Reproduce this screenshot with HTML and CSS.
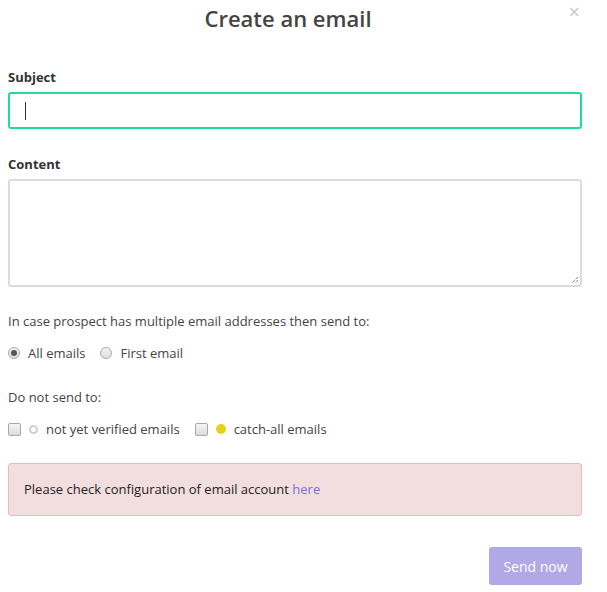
FILE: index.html
```html
<!DOCTYPE html>
<html>
<head>
<meta charset="utf-8">
<link rel="stylesheet" href="styles.css">
</head>
<body>
<div class="modal">
  <div class="header">
    <h1 class="title">Create an email</h1>
    <span class="close">×</span>
  </div>
  <div class="field subject-field">
    <label class="label">Subject</label>
    <div class="input focused"><span class="caret"></span></div>
  </div>
  <div class="field content-field">
    <label class="label">Content</label>
    <div class="textarea">
      <svg class="grip" width="8" height="8" viewBox="0 0 8 8"><path d="M7 1 L1 7 M7 4 L4 7" stroke="#555" stroke-width="1" stroke-dasharray="1 1" fill="none"/></svg>
    </div>
  </div>
  <p class="text q-text">In case prospect has multiple email addresses then send to:</p>
  <div class="opt-row radio-row">
    <span class="opt"><span class="radio checked"></span>All emails</span>
    <span class="opt"><span class="radio"></span>First email</span>
  </div>
  <p class="text dns-text">Do not send to:</p>
  <div class="opt-row check-row">
    <span class="opt"><span class="checkbox"></span><span class="dot dot-hollow"></span>not yet verified emails</span>
    <span class="opt"><span class="checkbox"></span><span class="dot dot-yellow"></span>catch-all emails</span>
  </div>
  <div class="alert">Please check configuration of email account <a class="link" href="#">here</a></div>
  <div class="footer">
    <button class="btn">Send now</button>
  </div>
</div>
</body>
</html>
```
FILE: styles.css
```css
html, body {
  margin: 0;
  padding: 0;
  background: #fff;
}
body {
  font-family: "Open Sans", "Segoe UI", sans-serif;
  color: #333;
  font-size: 13px;
}
.modal {
  width: 574px;
  padding: 0 25px 0 8px;
}
.header {
  position: relative;
  height: 40px;
  display: flex;
  justify-content: center;
}
.title {
  margin: 0;
  margin-right: 14px;
  padding-top: 2px;
  font-size: 22px;
  font-weight: 600;
  color: #444;
  line-height: 32px;
}
.close {
  position: absolute;
  right: 2px;
  top: 2px;
  font-size: 20px;
  line-height: 20px;
  color: #c8c8c8;
}
.field {
  display: flex;
  flex-direction: column;
}
.subject-field {
  margin-top: 28px;
}
.content-field {
  margin-top: 26px;
}
.label {
  font-weight: 700;
  font-size: 13px;
  color: #333;
  line-height: 18px;
  margin-bottom: 6px;
}
.input {
  height: 33px;
  border: 2px solid #1fdc9c;
  border-radius: 3px;
  position: relative;
}
.caret {
  position: absolute;
  left: 15px;
  top: 8px;
  width: 1px;
  height: 18px;
  background: #333;
}
.textarea {
  height: 104px;
  border: 2px solid #dcd9e8;
  border-radius: 3px;
  position: relative;
}
.grip {
  position: absolute;
  right: 1px;
  bottom: 1px;
}
.text {
  margin: 0;
  line-height: 18px;
  color: #444;
}
.q-text {
  margin-top: 25px;
}
.opt-row {
  display: flex;
  gap: 15px;
  line-height: 18px;
  color: #444;
}
.radio-row {
  margin-top: 14px;
}
.dns-text {
  margin-top: 26px;
}
.check-row {
  margin-top: 14px;
}
.opt {
  display: flex;
  align-items: center;
}
.radio {
  width: 10px;
  height: 10px;
  border: 1px solid #a9a9a9;
  border-radius: 50%;
  background: linear-gradient(#f3f3f3, #dedede);
  margin-right: 8px;
  position: relative;
}
.radio.checked::after {
  content: "";
  position: absolute;
  left: 2px;
  top: 2px;
  width: 6px;
  height: 6px;
  border-radius: 50%;
  background: #555;
}
.checkbox {
  width: 11px;
  height: 11px;
  border: 1px solid #a9a9a9;
  border-radius: 2px;
  background: linear-gradient(#f6f6f6, #dcdcdc);
  margin-right: 8px;
}
.dot {
  width: 9px;
  height: 9px;
  border-radius: 50%;
  margin-right: 8px;
  box-sizing: border-box;
}
.dot-hollow {
  border: 2px solid #cfcfcf;
}
.dot-yellow {
  background: #e3d21b;
  width: 10px;
  height: 10px;
}
.alert {
  margin-top: 25px;
  background: #f2dede;
  border: 1px solid #e6bcbf;
  border-radius: 3px;
  padding: 16px 15px 17px;
  line-height: 18px;
  color: #222;
}
.link {
  color: #7c6fd8;
  text-decoration: none;
}
.footer {
  display: flex;
  justify-content: flex-end;
  margin-top: 31px;
}
.btn {
  width: 93px;
  height: 38px;
  border: none;
  border-radius: 3px;
  background: #b0a9e6;
  color: #fff;
  font-family: inherit;
  font-size: 14px;
}
```
